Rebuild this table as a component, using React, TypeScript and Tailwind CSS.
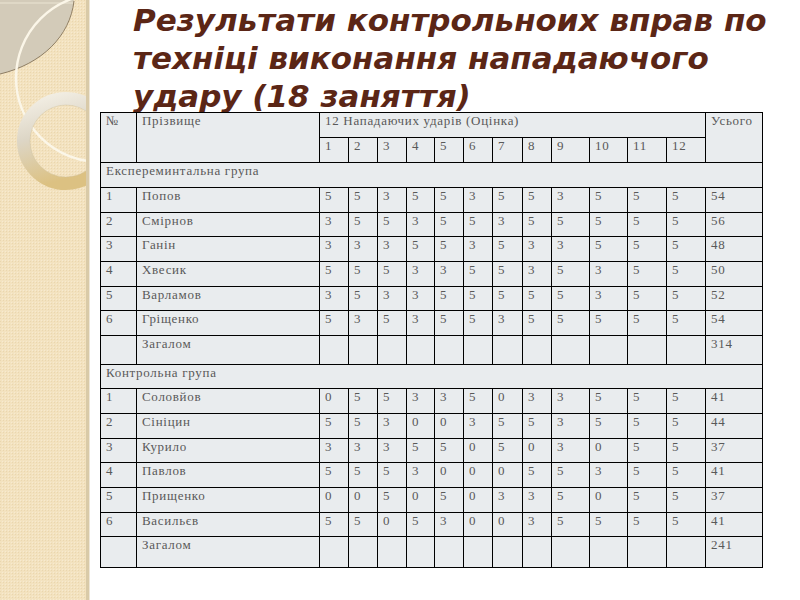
const expRows = [
  ['1', 'Попов', '5 5 3 5 5 3 5 5 3 5 5 5', '54'],
  ['2', 'Смірнов', '3 5 5 3 5 5 3 5 5 5 5 5', '56'],
  ['3', 'Ганін', '3 3 3 5 5 3 5 3 3 5 5 5', '48'],
  ['4', 'Хвесик', '5 5 5 3 3 5 5 3 5 3 5 5', '50'],
  ['5', 'Варламов', '3 5 3 3 5 5 5 5 5 3 5 5', '52'],
  ['6', 'Гріщенко', '5 3 5 3 5 5 3 5 5 5 5 5', '54'],
]

const ctrlRows = [
  ['1', 'Соловйов', '0 5 5 3 3 5 0 3 3 5 5 5', '41'],
  ['2', 'Сініцин', '5 5 3 0 0 3 5 5 3 5 5 5', '44'],
  ['3', 'Курило', '3 3 3 5 5 0 5 0 3 0 5 5', '37'],
  ['4', 'Павлов', '5 5 5 3 0 0 0 5 5 3 5 5', '41'],
  ['5', 'Прищенко', '0 0 5 0 5 0 3 3 5 0 5 5', '37'],
  ['6', 'Васильєв', '5 5 0 5 3 0 0 3 5 5 5 5', '41'],
]

const colWidths = [36, 183, 29, 29, 29, 28, 29, 29, 30, 29, 38, 38, 39, 39, 57]
const td = 'border border-black align-top pl-[5px] pt-0 leading-[15px] whitespace-nowrap overflow-hidden'

function Strip() {
  return (
    <svg width="90" height="600" viewBox="0 0 90 600" className="block shrink-0">
      <defs>
        <pattern id="weave" width="3" height="3" patternUnits="userSpaceOnUse">
          <rect width="3" height="3" fill="#f3e2bf" />
          <rect width="1" height="1" fill="#ead6ae" />
          <rect x="2" y="2" width="1" height="1" fill="#f7ead0" />
        </pattern>
        <linearGradient id="ring" x1="0" y1="0" x2="0.3" y2="1">
          <stop offset="0" stopColor="#f4f0e6" />
          <stop offset="0.45" stopColor="#ddd6c6" />
          <stop offset="1" stopColor="#dcc182" />
        </linearGradient>
      </defs>
      <rect width="88" height="600" fill="url(#weave)" />
      <path d="M0,0 L74,0 C70,36 42,64 0,74 Z" fill="#d3cbb9" />
      <path d="M74,1 C70,36 42,64 0,74" fill="none" stroke="#85745a" strokeWidth="0.9" />
      <line x1="0" y1="3" x2="73" y2="3" stroke="#ece5d4" strokeWidth="1.2" />
      <circle cx="100" cy="78" r="84" fill="none" stroke="#fbf6e8" strokeWidth="2.4" />
      <circle cx="66" cy="141" r="42.5" fill="none" stroke="url(#ring)" strokeWidth="13" />
      <circle cx="66" cy="141" r="36" fill="none" stroke="#c9bb98" strokeWidth="0.6" opacity="0.6" />
      <rect x="86" y="0" width="3" height="600" fill="#d9caa8" />
      <rect x="89" y="0" width="1" height="600" fill="#eee6d6" />
    </svg>
  )
}

function DataRow({ r }: { r: string[] }) {
  return (
    <tr className="h-[24.7px]">
      <td className={td}>{r[0]}</td>
      <td className={td}>{r[1]}</td>
      {r[2].split(' ').map((v, i) => (
        <td key={i} className={td}>{v}</td>
      ))}
      <td className={td}>{r[3]}</td>
    </tr>
  )
}

function TotalRow({ sum, h }: { sum: string; h: string }) {
  return (
    <tr className={h}>
      <td className={td}></td>
      <td className={td}>Загалом</td>
      {Array.from({ length: 12 }).map((_, i) => (
        <td key={i} className={td}></td>
      ))}
      <td className={td}>{sum}</td>
    </tr>
  )
}

export default function App() {
  return (
    <div className="w-[800px] h-[600px] overflow-hidden bg-white flex">
      <Strip />
      <div className="flex flex-col pl-[10px]">
        <h1
          className="pl-[33px] pt-[1px] text-[31px] leading-[38px] font-bold italic text-[#5b2616] whitespace-nowrap"
          style={{ fontFamily: '"DejaVu Sans", sans-serif' }}
        >
          Результати контрольноих вправ по
          <br />
          техніці виконання нападаючого
          <br />
          удару (18 заняття)
        </h1>
        <table
          className="mt-[-3px] table-fixed border-collapse w-[662px] bg-[#e9ecee] text-[13px] tracking-[0.7px] text-[#595959]"
          style={{ fontFamily: '"Liberation Serif", serif' }}
        >
          <colgroup>
            {colWidths.map((w, i) => (
              <col key={i} style={{ width: w }} />
            ))}
          </colgroup>
          <tbody>
            <tr className="h-[25px]">
              <td rowSpan={2} className={td}>№</td>
              <td rowSpan={2} className={td}>Прізвище</td>
              <td colSpan={12} className={td}>12 Нападаючих ударів (Оцінка)</td>
              <td rowSpan={2} className={td}>Усього</td>
            </tr>
            <tr className="h-[25px]">
              {Array.from({ length: 12 }).map((_, i) => (
                <td key={i} className={td}>{i + 1}</td>
              ))}
            </tr>
            <tr className="h-[25px]">
              <td colSpan={15} className={td}>Експереминтальна група</td>
            </tr>
            {expRows.map((r) => (
              <DataRow key={r[0]} r={r} />
            ))}
            <TotalRow sum="314" h="h-[29px]" />
            <tr className="h-[24px]">
              <td colSpan={15} className={td}>Контрольна група</td>
            </tr>
            {ctrlRows.map((r) => (
              <DataRow key={r[0]} r={r} />
            ))}
            <TotalRow sum="241" h="h-[31px]" />
          </tbody>
        </table>
      </div>
    </div>
  )
}
